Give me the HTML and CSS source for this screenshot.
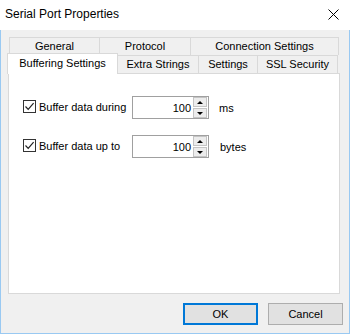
FILE: index.html
```html
<!DOCTYPE html>
<html>
<head>
<meta charset="utf-8">
<link rel="stylesheet" href="styles.css">
</head>
<body>
<div class="window">
  <div class="titlebar">
    <span class="title">Serial Port Properties</span>
    <svg class="close" width="11" height="11" viewBox="0 0 11 11"><path d="M0.5 0.5L10.5 10.5M10.5 0.5L0.5 10.5" stroke="#000" stroke-width="1"/></svg>
  </div>
  <div class="client">
    <div class="tabrow row1">
      <div class="tab t-general">General</div>
      <div class="tab t-protocol">Protocol</div>
      <div class="tab t-conn">Connection Settings</div>
    </div>
    <div class="tabrow row2">
      <div class="tab selected t-buff">Buffering Settings</div>
      <div class="tab t-extra">Extra Strings</div>
      <div class="tab t-settings">Settings</div>
      <div class="tab t-ssl">SSL Security</div>
    </div>
    <div class="panel">
      <div class="row">
        <span class="check"><svg width="11" height="11" viewBox="0 0 11 11"><path d="M1.5 5.5L4.2 8.3L9.6 2.2" fill="none" stroke="#222" stroke-width="1.2"/></svg></span>
        <span class="label">Buffer data during</span>
        <div class="spinbox">
          <span class="value">100</span>
          <div class="spin">
            <div class="sbtn"><span class="up"></span></div>
            <div class="sbtn"><span class="down"></span></div>
          </div>
        </div>
        <span class="unit">ms</span>
      </div>
      <div class="row">
        <span class="check"><svg width="11" height="11" viewBox="0 0 11 11"><path d="M1.5 5.5L4.2 8.3L9.6 2.2" fill="none" stroke="#222" stroke-width="1.2"/></svg></span>
        <span class="label">Buffer data up to</span>
        <div class="spinbox">
          <span class="value">100</span>
          <div class="spin">
            <div class="sbtn"><span class="up"></span></div>
            <div class="sbtn"><span class="down"></span></div>
          </div>
        </div>
        <span class="unit unit2">bytes</span>
      </div>
    </div>
    <div class="buttons">
      <button class="btn default">OK</button>
      <button class="btn">Cancel</button>
    </div>
  </div>
</div>
</body>
</html>
```
FILE: styles.css
```css
* { box-sizing: border-box; }
html, body { margin: 0; padding: 0; background: #fff; }
body {
  font-family: "Liberation Sans", Arial, sans-serif;
  font-size: 11px;
  color: #000;
}
.window { width: 350px; height: 334px; display: flex; flex-direction: column; }
.titlebar {
  height: 30px;
  background: #fff;
  display: flex;
  align-items: center;
  padding: 0 11px 2px 5px;
  justify-content: space-between;
  flex: none;
}
.title { font-size: 12px; }
.close { display: block; margin-top: 1px; }
.client {
  flex: 1;
  background: #f0f0f0;
  border: 1px solid #99c9f2;
  border-top: none;
  padding: 7px 9px 0 7px;
}
.tabrow { display: flex; height: 18px; }
.row1 { margin-left: 1px; }
.row2 { margin-left: -1px; }
.tab {
  height: 18px;
  border: 1px solid #d9d9d9;
  border-bottom: none;
  background: #f0f0f0;
  text-align: center;
  line-height: 17px;
  white-space: nowrap;
  flex: none;
}
.tab + .tab { margin-left: -1px; }
.t-general { width: 91px; }
.t-protocol { width: 92px; }
.t-conn { width: 149px; }
.t-buff { width: 111px; }
.t-extra { width: 82px; }
.t-settings { width: 60px; }
.t-ssl { width: 81px; }
.tab.selected {
  height: 21px;
  margin-top: -2px;
  background: #fff;
  position: relative;
  z-index: 2;
  line-height: 19px;
}
.panel {
  width: 332px;
  height: 221px;
  background: #fff;
  border: 1px solid #d9d9d9;
  padding: 22px 0 0 14px;
  display: flex;
  flex-direction: column;
  gap: 16px;
}
.row { display: flex; align-items: center; height: 23px; }
.check {
  width: 13px; height: 13px;
  border: 1px solid #333;
  background: #fff;
  display: flex; align-items: center; justify-content: center;
  margin-top: -3px;
  flex: none;
}
.check svg { display: block; }
.label { width: 96px; padding-left: 3px; margin-top: -1px; }
.spinbox {
  width: 77px; height: 23px;
  border: 1px solid #a0a0a0;
  background: #fff;
  display: flex;
  align-items: center;
  justify-content: flex-end;
  padding: 1px 1px 1px 0;
}
.value { font-size: 11px; padding-right: 2px; }
.spin { display: flex; flex-direction: column; gap: 1px; width: 14px; height: 21px; }
.sbtn {
  flex: 1;
  background: #ececec;
  border: 1px solid #c4c4c4;
  display: flex; align-items: center; justify-content: center;
}
.up, .down { width: 0; height: 0; border-left: 3px solid transparent; border-right: 3px solid transparent; }
.up { border-bottom: 3px solid #000; }
.down { border-top: 3px solid #000; }
.unit { margin-left: 10px; }
.unit2 { margin-left: 11px; }
.buttons {
  display: flex;
  justify-content: flex-end;
  gap: 10px;
  margin-top: 9px;
  margin-right: -3px;
}
.btn {
  width: 75px; height: 22px;
  font-family: "Liberation Sans", Arial, sans-serif;
  font-size: 11px;
  color: #000;
  background: #e1e1e1;
  border: 1px solid #adadad;
  padding: 0;
}
.btn.default { border: 2px solid #0078d7; }
```
